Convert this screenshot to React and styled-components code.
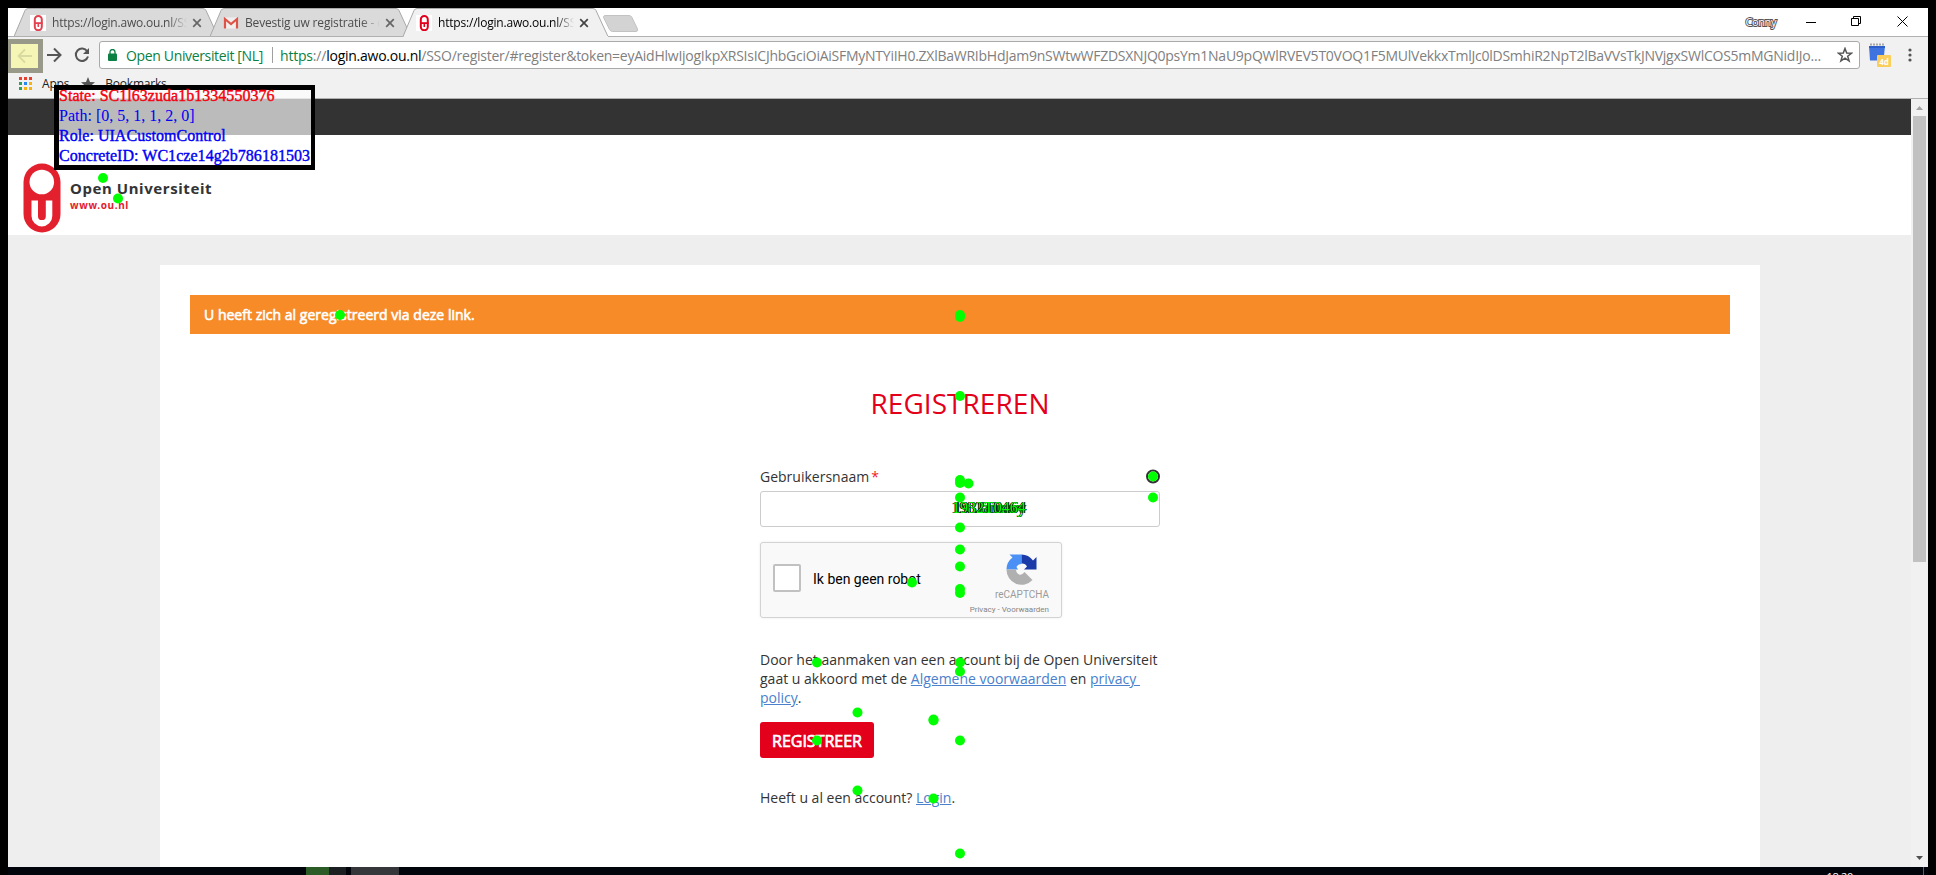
import React from "react";
import styled, { createGlobalStyle, css } from "styled-components";

const Global = createGlobalStyle`
  * { box-sizing: border-box; }
  html, body { margin: 0; background: #000; overflow: hidden; }
  p, h1 { margin: 0; }
`;

const ui = '"Open Sans", "Noto Sans", sans-serif';

const Screen = styled.div`
  position: relative;
  width: 1936px;
  height: 875px;
  padding: 8px 8px 0;
  overflow: hidden;
  background: #000;
  font-family: ${ui};
`;

const Window = styled.div`
  display: flex;
  flex-direction: column;
  height: 859px;
  background: #fff;
`;

/* ---------- browser chrome ---------- */

const TabStrip = styled.div`
  display: flex;
  height: 29px;
  padding-left: 6px;
  border-bottom: 1px solid #b0b0b0;
`;

const TabBox = styled.div`
  position: relative;
  display: flex;
  align-items: center;
  flex: none;
  width: ${(p) => p.$w}px;
  height: 29px;
  margin-right: -10px;
  padding: 0 0 0 ${(p) => p.$pad}px;
  z-index: ${(p) => (p.$active ? 3 : 1)};
`;

const TabShape = styled.svg`
  position: absolute;
  inset: 0;
  z-index: -1;
`;

const TabLabel = styled.span`
  width: ${(p) => p.$w}px;
  margin-left: 6px;
  overflow: hidden;
  white-space: nowrap;
  font-size: 12px;
  line-height: 20px;
  letter-spacing: ${(p) => p.$ls || 0}px;
  color: ${(p) => (p.$active ? "#000" : "#4c4c4c")};
  mask-image: linear-gradient(to right, #000 86%, transparent 100%);
`;

const CloseIcon = styled.svg`
  margin-left: 5px;
  flex: none;
`;

const NewTab = styled.svg`
  margin: 7px 0 0 3px;
`;

const WindowControls = styled.div`
  display: flex;
  align-items: center;
  margin-left: auto;
  height: 27px;
  padding-right: 20px;
`;

const UserName = styled.span`
  font-size: 11px;
  letter-spacing: -0.4px;
  color: #fff;
  -webkit-text-stroke: 2px #555;
  paint-order: stroke fill;
  margin-right: 30px;
`;

const ControlIcon = styled.svg`
  margin-left: ${(p) => p.$gap || 0}px;
`;

const Toolbar = styled.div`
  display: flex;
  align-items: center;
  height: 36px;
  background: #f1f1f1;
`;

const BackButton = styled.div`
  display: flex;
  align-items: center;
  justify-content: center;
  width: 35px;
  height: 34px;
  margin-top: 2px;
  border: 5px solid #999989;
  border-left-width: 3px;
  background: #f5f5b5;
`;

const ToolIcon = styled.svg`
  flex: none;
  margin-left: ${(p) => p.$gap}px;
`;

const Omnibox = styled.div`
  display: flex;
  align-items: center;
  width: 1761px;
  height: 28px;
  margin-left: 9px;
  padding: 0 6px 0 8px;
  border: 1px solid #a9a9a9;
  border-radius: 3px;
  background: #fff;
  font-size: 14px;
  white-space: nowrap;
  svg { flex: none; }
`;

const Issuer = styled.span`
  width: 138px;
  margin-left: 9px;
  color: #0b8043;
  letter-spacing: ${(p) => p.$ls}px;
`;

const Divider = styled.i`
  width: 1px;
  height: 16px;
  margin: 0 7px 0 8px;
  background: #a0a0a0;
`;

const Url = styled.span`
  flex: 1;
  min-width: 0;
  color: #808080;
`;
const UrlPart = styled.span`
  color: ${(p) => p.$c};
  letter-spacing: ${(p) => p.$ls}px;
`;

const Bookmarks = styled.div`
  display: flex;
  align-items: flex-start;
  height: 26px;
  padding: 1px 0 0 11px;
  background: #f1f1f1;
  border-bottom: 1px solid #b0b0b0;
  font-size: 12px;
  line-height: 20px;
  color: #222;
  letter-spacing: ${(p) => p.$ls}px;
`;

const BookmarkIcon = styled.svg`
  margin: 3px 10px 0 0;
`;
const BookmarkName = styled.span`
  margin-right: 12px;
`;

/* ---------- page ---------- */

const Viewport = styled.div`
  display: flex;
  flex: 1;
  min-height: 0;
`;

const Page = styled.main`
  width: 1903px;
  background: #eee;
  overflow: hidden;
`;

const DarkBar = styled.div`
  height: 36px;
  background: #333;
`;

const SiteHeader = styled.header`
  display: flex;
  height: 100px;
  padding: 28px 0 0 15px;
  background: #fff;
`;

const Brand = styled.div`
  margin: 17px 0 0 9px;
`;
const BrandName = styled.div`
  font: 700 15px/17px "Noto Sans", sans-serif;
  letter-spacing: ${(p) => p.$ls}px;
  color: #333436;
`;
const BrandUrl = styled.div`
  margin-top: 1px;
  font: 700 10px/14px "Noto Sans", sans-serif;
  letter-spacing: 0.65px;
  color: #e3202e;
`;

const Card = styled.section`
  width: 1600px;
  height: 640px;
  margin: 30px 0 0 152px;
  padding: 30px;
  background: #fff;
`;

const Alert = styled.div`
  height: 39px;
  padding-left: 14px;
  background: #f68b28;
  color: #fff;
  font-size: 14px;
  line-height: 39px;
  letter-spacing: ${(p) => p.$ls}px;
  -webkit-text-stroke: 0.6px #fff;
`;

const Title = styled.h1`
  margin-top: 50px;
  text-align: center;
  font-size: 28px;
  font-weight: 400;
  line-height: 38px;
  letter-spacing: ${(p) => p.$ls}px;
  color: #e3001b;
`;

const Form = styled.div`
  width: 400px;
  margin: 45px auto 0;
  color: #333;
  font-size: 14px;
  line-height: 19px;
`;

const Label = styled.div`
  display: flex;
  gap: 2px;
  letter-spacing: ${(p) => p.$ls}px;
`;
const Required = styled.span`
  color: #f01c1c;
`;

const Input = styled.div`
  height: 36px;
  margin-top: 5px;
  border: 1px solid #ccc;
  border-radius: 3px;
`;

const Captcha = styled.div`
  display: flex;
  width: 302px;
  height: 76px;
  margin-top: 15px;
  padding-left: 12px;
  border: 1px solid #d3d3d3;
  border-radius: 3px;
  background: #f9f9f9;
  box-shadow: 0 0 3px rgba(0, 0, 0, 0.08);
  font-family: Roboto, sans-serif;
`;
const Checkbox = styled.div`
  width: 28px;
  height: 28px;
  margin-top: 21px;
  border: 2px solid #c1c1c1;
  border-radius: 2px;
  background: #fff;
`;
const CaptchaText = styled.span`
  margin: 27px 0 0 12px;
  color: #000;
  white-space: nowrap;
  letter-spacing: ${(p) => p.$ls}px;
`;
const CaptchaBrand = styled.div`
  display: flex;
  flex-direction: column;
  align-items: flex-end;
  margin-left: auto;
  padding: 11px 12px 0 0;
  color: #9b9b9b;
  svg { margin-right: 12px; }
`;
const CaptchaName = styled.span`
  font-size: 10px;
  line-height: 12px;
  margin-top: 4px;
  letter-spacing: ${(p) => p.$ls}px;
`;
const CaptchaLinks = styled.span`
  font-size: 8px;
  line-height: 10px;
  margin-top: 4px;
  color: #858585;
  letter-spacing: ${(p) => p.$ls}px;
`;

const Terms = styled.p`
  margin-top: 32px;
  white-space: nowrap;
`;
const Line = styled.span`
  display: block;
  white-space: pre;
  letter-spacing: ${(p) => p.$ls}px;
`;
const Link = styled.span`
  color: #4a80cc;
  text-decoration: underline;
`;

const Submit = styled.div`
  width: 114px;
  height: 36px;
  margin-top: 15px;
  border-radius: 3px;
  background: #e3001b;
  color: #fff;
  text-align: center;
  font-size: 16px;
  line-height: 39px;
  letter-spacing: ${(p) => p.$ls}px;
  -webkit-text-stroke: 0.7px #fff;
`;

const LoginLine = styled.p`
  margin-top: 30px;
  letter-spacing: ${(p) => p.$ls}px;
`;

const Scrollbar = styled.div`
  display: flex;
  flex-direction: column;
  align-items: center;
  width: 17px;
  background: #f1f1f1;
`;
const Thumb = styled.div`
  width: 13px;
  height: 446px;
  margin: 0 0 auto 0;
  background: #c1c1c1;
`;

/* ---------- taskbar ---------- */

const Taskbar = styled.div`
  display: flex;
  height: 8px;
  overflow: hidden;
  background: #01040a;
`;
const TaskItem = styled.div`
  flex: none;
  width: ${(p) => p.$w}px;
  margin-left: ${(p) => p.$gap || 0}px;
  background: ${(p) => p.$c};
`;
const Clock = styled.span`
  margin: 3px 70px 0 auto;
  color: #fff;
  font-size: 11px;
  line-height: 14px;
  letter-spacing: -0.3px;
`;

/* ---------- inspector overlay ---------- */

const Layer = styled.svg`
  position: absolute;
  left: 0;
  top: 0;
  z-index: 10;
`;

const InfoBox = styled.div`
  position: absolute;
  left: 54px;
  top: 85px;
  z-index: 11;
  width: 261px;
  height: 85px;
  border: 5px solid #000;
  border-right-width: 4px;
  background: rgba(255, 255, 255, 0.667);
  font: 16px/20px "Liberation Serif", serif;
  color: #0000f5;
`;
const InfoLine = styled.div`
  height: 20px;
  white-space: nowrap;
  position: relative;
  top: -4px;
  letter-spacing: ${(p) => p.$ls || 0}px;
  ${(p) => !p.$thin && css`-webkit-text-stroke: 0.4px currentColor;`}
  ${(p) => p.$red && css`color: #f5000c;`}
`;

const Clash = styled.span`
  position: absolute;
  left: ${(p) => p.$x}px;
  top: 498px;
  z-index: 12;
  font: 16px/20px "Liberation Serif", serif;
  color: #00ff00;
  text-shadow: 1px 0 0 #000, -1px 0 0 #000;
  letter-spacing: ${(p) => p.$ls}px;
  white-space: nowrap;
`;

const DOTS = [
  [103, 178], [118, 198.5], [340, 315], [960, 315], [960, 317], [960, 396],
  [960, 480], [960, 483], [968.5, 483.5], [1153, 476.5], [1153, 497.5],
  [960, 497.5], [960, 527.5], [960, 549.5], [960, 566.5], [960, 589],
  [960, 593], [912, 582.5], [817, 662.5], [960, 662.5], [960, 671.5],
  [857.5, 712.5], [933.5, 719.5], [933.5, 720.5], [817, 740.5], [960, 740.5],
  [857.5, 790.5], [933.5, 798.5], [960, 853.5],
];

const OuMark = ({ w, h, color = "#e3202e" }) => (
  <svg width={w} height={h} viewBox="0 0 38 70" preserveAspectRatio="none">
    <rect x="0.5" y="0.5" width="37" height="69" rx="18.5" fill={color} />
    <circle cx="18.8" cy="19" r="12.3" fill="#fff" />
    <path
      d="M8.5 37.5H15V53.2a3.9 3.9 0 0 0 7.8 0V37.5H29.3V53a10.4 10.4 0 0 1-20.8 0Z"
      fill="#fff"
    />
  </svg>
);

const SmallOuIcon = ({ color }) => (
  <svg width="16" height="16" viewBox="0 0 16 16">
    <rect width="16" height="16" fill="#fff" />
    <rect x="4.8" y="1" width="7" height="14.2" rx="3.5" fill="#fff" stroke={color} strokeWidth="2" />
    <path d="M4 7.2H12.6V9H4Z" fill={color} />
    <path d="M8.3 8V12" stroke={color} strokeWidth="1.6" />
  </svg>
);

const GmailIcon = () => (
  <svg width="16" height="16" viewBox="0 0 16 16">
    <rect x="1" y="2.5" width="14" height="11" fill="#f1eeee" />
    <path d="M2 13.5V4L8 9L14 4V13.5" fill="none" stroke="#dd5347" strokeWidth="2.2" />
  </svg>
);

const Close = ({ dark }) => (
  <CloseIcon width="10" height="10" viewBox="0 0 10 10">
    <path d="M1.2 1.2L8.8 8.8M8.8 1.2L1.2 8.8" stroke={dark ? "#444" : "#666"} strokeWidth="1.7" />
  </CloseIcon>
);

const Tab = ({ w, pad, labelW, active, icon, text, ls }) => (
  <TabBox $w={w} $pad={pad} $active={active}>
    <TabShape width={w} height="29" viewBox={`0 0 ${w} 29`}>
      <path
        d={`M0 28.5L11 2.5Q12 0.5 14 0.5H${w - 17}Q${w - 15} 0.5 ${w - 14} 2.5L${w - 2} 28.5`}
        fill={active ? "#f1f1f1" : "#dadada"}
        stroke="#a8a8a8"
      />
      {active ? (
        <path d={`M1 28.5H${w - 2}`} stroke="#f1f1f1" />
      ) : (
        <path d={`M0 28.5H${w}`} stroke="#b0b0b0" />
      )}
    </TabShape>
    {icon}
    <TabLabel $w={labelW} $active={active} $ls={ls}>{text}</TabLabel>
    <Close dark={active} />
  </TabBox>
);

const APP_COLORS = [
  "#e8402f", "#e8402f", "#e8402f",
  "#2fa05a", "#2b86f3", "#f5b213",
  "#2fa05a", "#f5b213", "#f5b213",
];

export default function App() {
  return (
    <Screen>
      <Global />
      <Window>
        <TabStrip>
          <Tab w={206} pad={16} labelW={135} icon={<SmallOuIcon color="#e34350" />} text="https://login.awo.ou.nl/SSO" ls={-0.2} />
          <Tab w={203} pad={13} labelW={135} icon={<GmailIcon />} text="Bevestig uw registratie - conny" ls={-0.17} />
          <Tab w={207} pad={13} labelW={136} active icon={<SmallOuIcon color="#e3001b" />} text="https://login.awo.ou.nl/SSO" ls={-0.2} />
          <NewTab width="36" height="18" viewBox="0 0 36 18">
            <path d="M2 0.5H26Q28 0.5 29 2.5L34.5 14Q35 16.5 33 16.5H9.5Q7.5 16.5 6.5 14.5L0.5 2.5Q0.5 0.5 2 0.5Z" fill="#d3d3d3" stroke="#c2c2c2" />
          </NewTab>
          <WindowControls>
            <UserName>Conny</UserName>
            <ControlIcon width="10" height="10">
              <path d="M0 5.5H10" stroke="#000" />
            </ControlIcon>
            <ControlIcon $gap={35} width="11" height="11">
              <path d="M0.5 2.5H7.5V9.5H0.5ZM2.5 2.5V0.5H9.5V7.5H7.5" fill="none" stroke="#000" />
            </ControlIcon>
            <ControlIcon $gap={35} width="11" height="11">
              <path d="M0.5 0.5L10.5 10.5M10.5 0.5L0.5 10.5" stroke="#000" />
            </ControlIcon>
          </WindowControls>
        </TabStrip>

        <Toolbar>
          <BackButton>
            <svg width="16" height="16" viewBox="0 0 16 16">
              <path d="M15 8H2M8 1.5L1.5 8L8 14.5" fill="none" stroke="#d9d9a2" strokeWidth="1.8" />
            </svg>
          </BackButton>
          <ToolIcon $gap={3} width="16" height="16" viewBox="0 0 16 16">
            <path d="M1 8H14M8 1.5L14.5 8L8 14.5" fill="none" stroke="#555" strokeWidth="2" />
          </ToolIcon>
          <ToolIcon $gap={12} width="16" height="16" viewBox="0 0 16 16">
            <path d="M13.2 4.2A6.2 6.2 0 1 0 14 9.5" fill="none" stroke="#555" strokeWidth="2" />
            <path d="M15 1V7H9Z" fill="#555" />
          </ToolIcon>
          <Omnibox>
            <svg width="9" height="12" viewBox="0 0 9 12">
              <rect y="4.5" width="9" height="7.5" rx="1" fill="#0b8043" />
              <path d="M2 5V3a2.500 2.500 0 0 1 5 0V5" fill="none" stroke="#0b8043" strokeWidth="1.3" />
            </svg>
            <Issuer $ls={-0.35}>Open Universiteit [NL]</Issuer>
            <Divider />
            <Url>
              <UrlPart $c="#0b8043" $ls={-0.2}>https</UrlPart>
              <UrlPart $c="#808080" $ls={-0.2}>://</UrlPart>
              <UrlPart $c="#000" $ls={-0.25}>login.awo.ou.nl</UrlPart>
              <UrlPart $c="#808080" $ls={-0.25}>/SSO/register/#register&amp;token=</UrlPart>
              <UrlPart $c="#808080" $ls={-0.25}>
                eyAidHlwIjogIkpXRSIsICJhbGciOiAiSFMyNTYiIH0.ZXlBaWRIbHdJam9nSWtwWFZDSXNJQ0psYm1NaU9pQWlRVEV5T0VOQ1F5MUlVekkxTmlJc0lDSmhiR2NpT2lBaVVsTkJNVjgxSWlCOS5mMGNidIJo...
              </UrlPart>
            </Url>
            <svg width="16" height="16" viewBox="0 0 16 16">
              <path d="M8 1.5L9.7 6.1L14.5 6.3L10.7 9.2L12.1 14L8 11.2L3.9 14L5.3 9.2L1.5 6.3L6.3 6.1Z" fill="none" stroke="#555" strokeWidth="1.5" />
            </svg>
          </Omnibox>
          <ToolIcon $gap={8} width="24" height="24" viewBox="0 0 24 24">
            <path d="M1 3H17L15.5 17.5H2Z" fill="#3f73df" />
            <path d="M1 4H17" stroke="#2f5fc8" strokeWidth="2" />
            <path d="M2 1.5H16" stroke="#aaa" strokeWidth="2" strokeDasharray="2 1" />
            <rect x="9" y="12" width="14" height="12" rx="1" fill="#fbce5b" />
            <text x="16" y="21.5" fontSize="8" fontWeight="700" fill="#fff" textAnchor="middle">4d</text>
          </ToolIcon>
          <ToolIcon $gap={15} width="6" height="16" viewBox="0 0 6 16">
            <circle cx="3" cy="3" r="1.6" fill="#555" />
            <circle cx="3" cy="8" r="1.6" fill="#555" />
            <circle cx="3" cy="13" r="1.6" fill="#555" />
          </ToolIcon>
        </Toolbar>

        <Bookmarks $ls={-0.2}>
          <BookmarkIcon width="13" height="13">
            {APP_COLORS.map((c, i) => (
              <rect key={i} x={(i % 3) * 5} y={Math.floor(i / 3) * 5} width="3" height="3" fill={c} />
            ))}
          </BookmarkIcon>
          <BookmarkName>Apps</BookmarkName>
          <BookmarkIcon width="14" height="14" viewBox="0 0 14 14">
            <path d="M7 0L9 4.9L14 5.2L10.2 8.4L11.5 13.5L7 10.7L2.5 13.5L3.8 8.4L0 5.2L5 4.9Z" fill="#555" />
          </BookmarkIcon>
          <BookmarkName>Bookmarks</BookmarkName>
        </Bookmarks>

        <Viewport>
          <Page>
            <DarkBar />
            <SiteHeader>
              <OuMark w={38} h={70} />
              <Brand>
                <BrandName $ls={0.58}>Open Universiteit</BrandName>
                <BrandUrl>www.ou.nl</BrandUrl>
              </Brand>
            </SiteHeader>
            <Card>
              <Alert $ls={0.02}>U heeft zich al geregistreerd via deze link.</Alert>
              <Title $ls={0.05}>REGISTREREN</Title>
              <Form>
                <Label $ls={0}>
                  Gebruikersnaam <Required>*</Required>
                </Label>
                <Input />
                <Captcha>
                  <Checkbox />
                  <CaptchaText $ls={0}>Ik ben geen robot</CaptchaText>
                  <CaptchaBrand>
                    <svg width="31" height="31" viewBox="0 0 31 31">
                      <path d="M15.5 0.5V10A5.5 5.5 0 0 0 10.5 13L12 15.5H0.5A15 15 0 0 1 6.5 3.5L3.5 0.5Z" fill="#4a90f5" />
                      <path d="M15.5 0.5A15 15 0 0 1 27 6.500L30.5 3V15.5H18L21 12.5A5.5 5.5 0 0 0 15.5 9.5Z" fill="#1c3ba8" />
                      <path d="M0.5 15.5H10A5.5 5.5 0 0 0 13 20.5Q16 21.5 18.5 18L26.5 26A15 15 0 0 1 0.5 15.5Z" fill="#b0b0b0" />
                    </svg>
                    <CaptchaName $ls={0}>reCAPTCHA</CaptchaName>
                    <CaptchaLinks $ls={0}>Privacy - Voorwaarden</CaptchaLinks>
                  </CaptchaBrand>
                </Captcha>
                <Terms>
                  <Line $ls={0}>Door het aanmaken van een account bij de Open Universiteit</Line>
                  <Line $ls={0}>
                    gaat u akkoord met de <Link>Algemene voorwaarden</Link> en <Link>{"privacy "}</Link>
                  </Line>
                  <Line $ls={0}>
                    <Link>policy</Link>.
                  </Line>
                </Terms>
                <Submit $ls={0}>REGISTREER</Submit>
                <LoginLine $ls={0}>
                  Heeft u al een account? <Link>Login</Link>.
                </LoginLine>
              </Form>
            </Card>
          </Page>
          <Scrollbar>
            <svg width="17" height="17">
              <path d="M5 11L8.5 7L12 11Z" fill="#a3a3a3" />
            </svg>
            <Thumb />
            <svg width="17" height="17">
              <path d="M5 6L8.5 10L12 6Z" fill="#505050" />
            </svg>
          </Scrollbar>
        </Viewport>
      </Window>

      <Taskbar>
        <TaskItem $gap={298} $w={23} $c="#2b5c28" />
        <TaskItem $w={17} $c="#1b1f21" />
        <TaskItem $gap={5} $w={48} $c="#35363a" />
        <Clock>18:20</Clock>
        <TaskItem $w={1} $c="#5a5f66" />
        <TaskItem $w={4} $c="#01040a" />
      </Taskbar>

      <InfoBox>
        <InfoLine $red $ls={0.03}>State: SC1l63zuda1b1334550376</InfoLine>
        <InfoLine $thin>Path: [0, 5, 1, 1, 2, 0]</InfoLine>
        <InfoLine $ls={0.04}>Role: UIACustomControl</InfoLine>
        <InfoLine $ls={0.04}>ConcreteID: WC1cze14g2b786181503</InfoLine>
      </InfoBox>

      <Layer width="1936" height="875">
        <circle cx="1153" cy="476.5" r="6" fill="none" stroke="#333" strokeWidth="2" />
        {DOTS.map(([x, y], i) => (
          <circle key={i} cx={x} cy={y} r="5" fill="#00ff00" />
        ))}
      </Layer>
      <Clash $x={953} $ls={0}>1st January</Clash>
      <Clash $x={952} $ls={0}>1932T0464</Clash>
    </Screen>
  );
}
